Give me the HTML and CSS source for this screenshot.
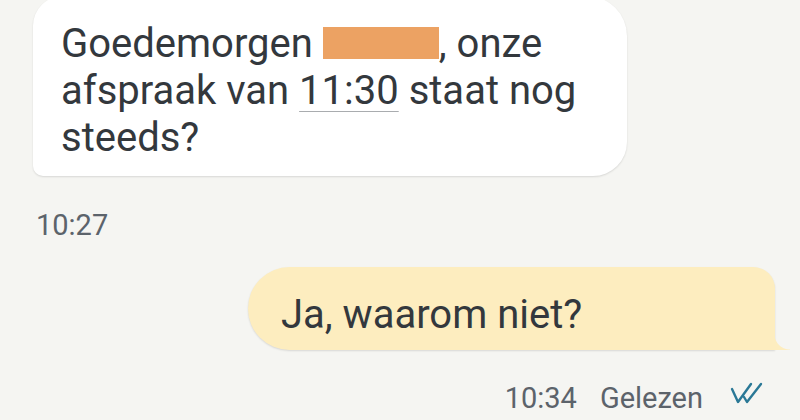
FILE: index.html
```html
<!doctype html>
<html>
  <head>
    <title>Chat</title>
    <meta charset="UTF-8" />
    <link rel="stylesheet" href="styles.css">
  </head>
  <body>
    <div class="chat">
      <div class="bubble incoming">
        Goedemorgen <span class="redacted"></span>, onze
        afspraak van <span class="time-link">11:30</span> staat nog
        steeds?
      </div>
      <div class="stamp">10:27</div>

      <div class="bubble outgoing">Ja, waarom niet?</div>
      <div class="status">
        <span>10:34</span>
        <span>Gelezen</span>
        <svg class="read-icon" width="34" height="26" viewBox="0 0 34 26">
          <path d="M3 8 L9 21 L22 3" />
          <path d="M15 16 L18 21 L32 3" />
        </svg>
      </div>
    </div>
  </body>
</html>
```

FILE: styles.css
```css
html,
body {
  margin: 0;
  padding: 0;
  height: 100%;
  overflow: hidden;
}
body {
  font-family: Roboto, 'Noto Sans', sans-serif;
  -webkit-font-smoothing: antialiased;
  background-color: #f5f5f2;
  color: #33383d;
}
.chat {
  display: flex;
  flex-direction: column;
}
.bubble {
  font-size: 40px;
  line-height: 47px;
  box-sizing: border-box;
  box-shadow: 0 1px 2px rgba(0, 0, 0, 0.12);
}
.incoming {
  margin-top: -4px;
  margin-left: 33px;
  width: 594px;
  padding: 24px 20px 15px 28px;
  background-color: #ffffff;
  border-radius: 30px 40px 34px 10px;
}
.redacted {
  display: inline-block;
  width: 116px;
  height: 32px;
  vertical-align: -2px;
  background-color: #eca263;
}
.time-link {
  text-decoration: underline;
  text-decoration-color: #a9acaf;
  text-decoration-thickness: 1px;
  text-underline-offset: 7px;
}
.stamp {
  margin-top: 32px;
  margin-left: 36px;
  font-size: 29px;
  line-height: 34px;
  color: #5c636b;
}
.outgoing {
  position: relative;
  align-self: flex-end;
  margin-top: 25px;
  margin-right: 25px;
  width: 527px;
  height: 83px;
  padding: 24px 20px 12px 33px;
  background-color: #fdedbf;
  border-radius: 42px 22px 0 42px;
}
.outgoing::after {
  content: '';
  position: absolute;
  right: -15px;
  bottom: 0;
  width: 16px;
  height: 16px;
  background: radial-gradient(circle at 100% 0, transparent 15px, #fdedbf 16px);
}
.status {
  display: flex;
  align-items: center;
  justify-content: flex-end;
  gap: 23px;
  margin-top: 31px;
  margin-right: 37px;
  font-size: 29px;
  line-height: 34px;
  color: #5c636b;
}
.read-icon {
  margin-left: 3px;
  margin-top: -8px;
  fill: none;
  stroke: #2a7896;
  stroke-width: 2.4;
  stroke-linecap: round;
  stroke-linejoin: round;
}
```
